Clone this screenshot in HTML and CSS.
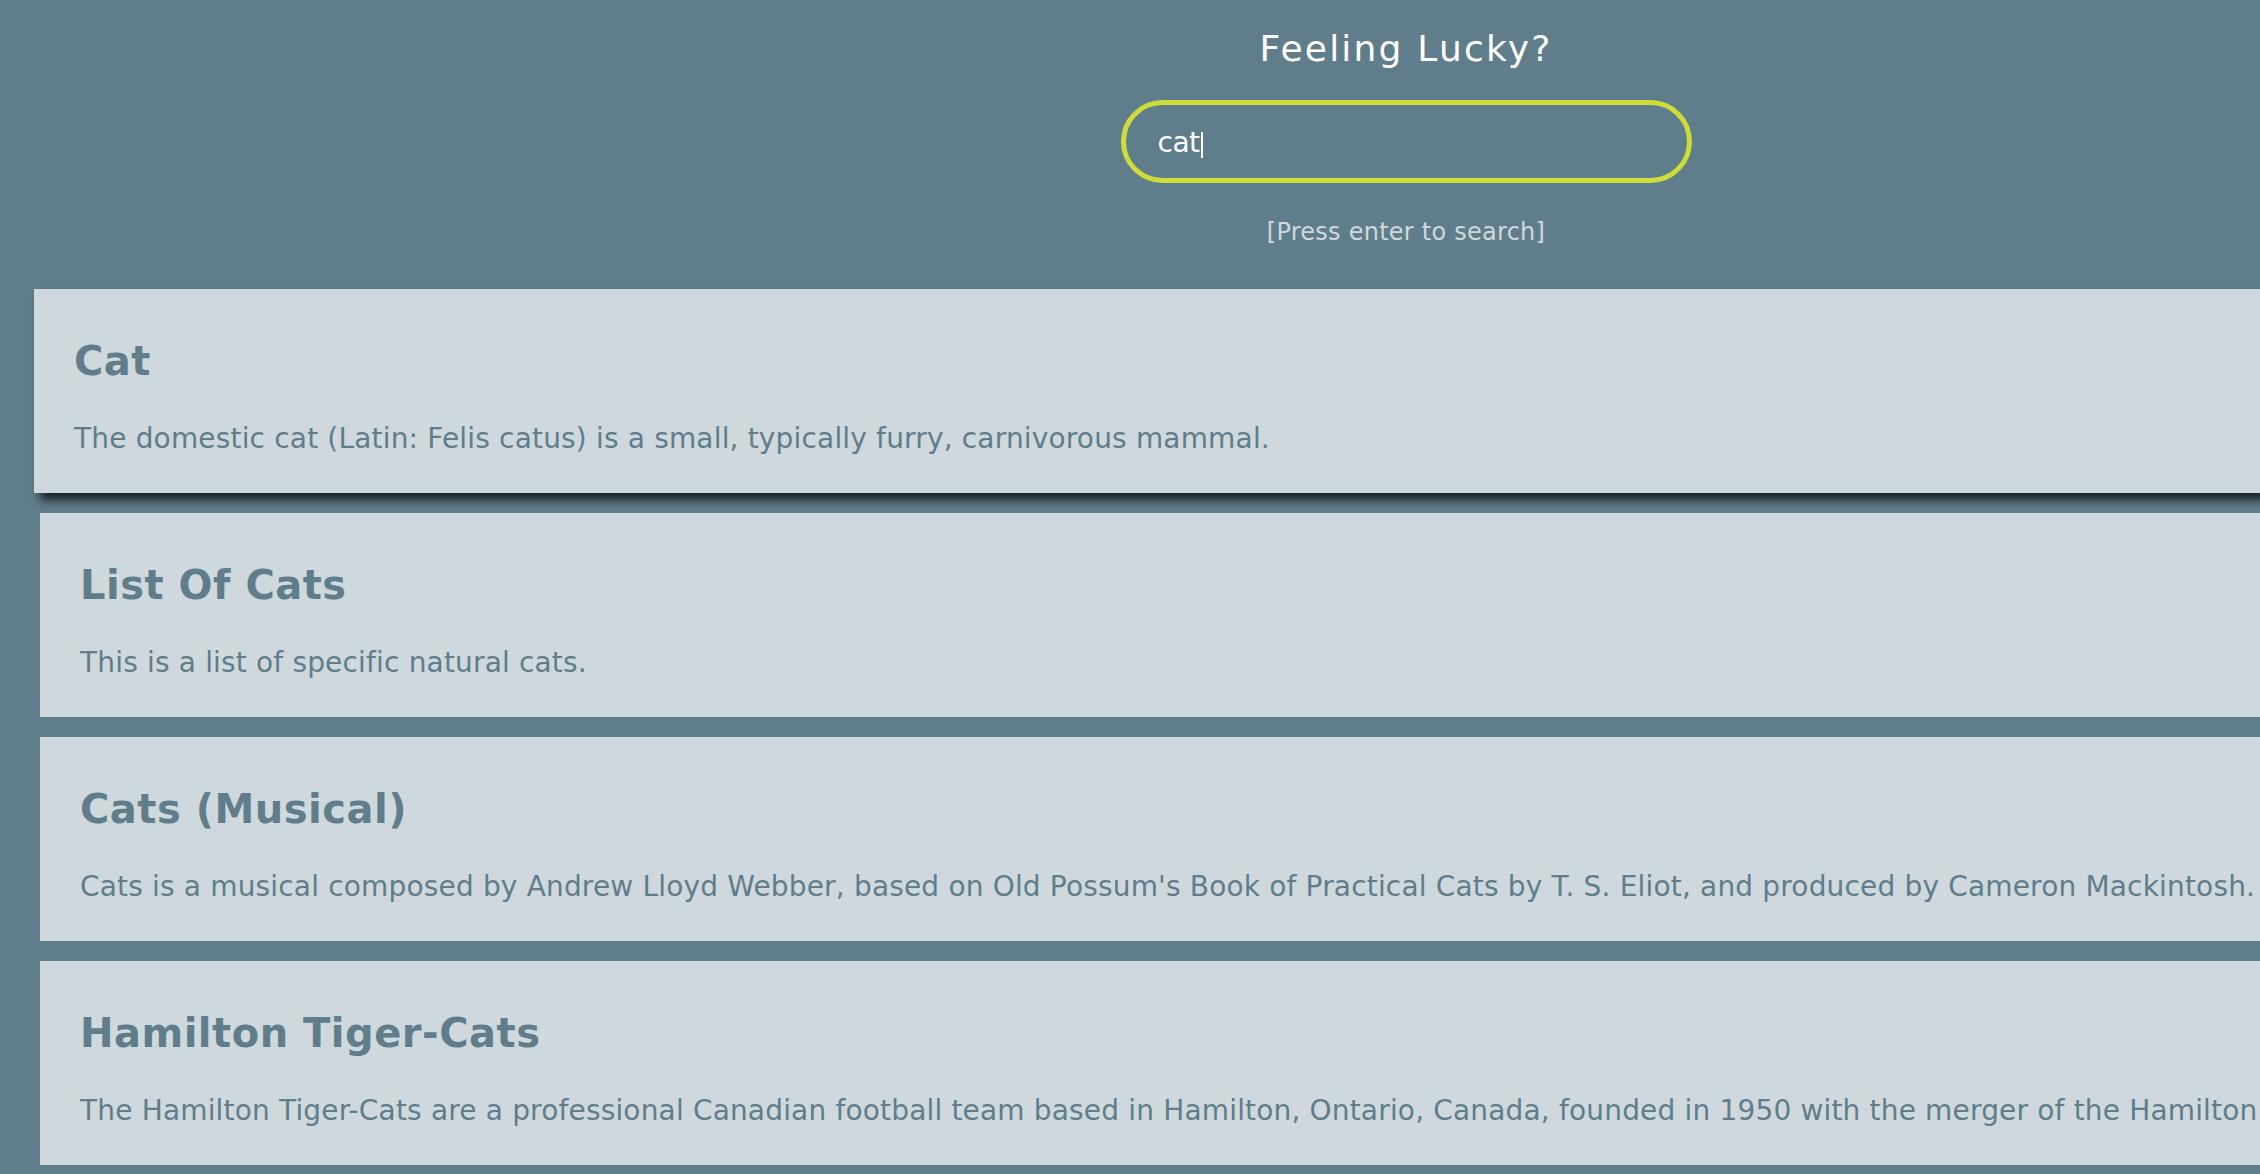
FILE: index.html
```html
<!DOCTYPE html>
<html lang="en">
<head>
<meta charset="utf-8">
<title>Feeling Lucky?</title>
<link rel="stylesheet" href="styles.css">
</head>
<body>
<div class="page">
  <header class="search">
    <h1 class="search-title">Feeling Lucky?</h1>
    <div class="search-box" role="textbox" aria-label="Search"><span class="search-value">cat</span><span class="search-caret"></span></div>
    <p class="search-hint">[Press enter to search]</p>
  </header>
  <main class="results">
    <article class="result result-active">
      <h2 class="result-title">Cat</h2>
      <p class="result-text">The domestic cat (Latin: Felis catus) is a small, typically furry, carnivorous mammal.</p>
    </article>
    <article class="result">
      <h2 class="result-title">List Of Cats</h2>
      <p class="result-text">This is a list of specific natural cats.</p>
    </article>
    <article class="result">
      <h2 class="result-title">Cats (Musical)</h2>
      <p class="result-text">Cats is a musical composed by Andrew Lloyd Webber, based on Old Possum's Book of Practical Cats by T. S. Eliot, and produced by Cameron Mackintosh.</p>
    </article>
    <article class="result">
      <h2 class="result-title">Hamilton Tiger-Cats</h2>
      <p class="result-text">The Hamilton Tiger-Cats are a professional Canadian football team based in Hamilton, Ontario, Canada, founded in 1950 with the merger of the Hamilton Tigers and the Hamilton Wildcats.</p>
    </article>
  </main>
</div>
</body>
</html>
```
FILE: styles.css
```css
html, body {
  margin: 0;
  padding: 0;
  background: #607d8b;
  overflow: hidden;
}
body {
  font-family: "DejaVu Sans", Verdana, sans-serif;
  color: #607d8b;
}
.page {
  width: 2812px;
  box-sizing: border-box;
  padding: 0 40px;
}
.search {
  display: flex;
  flex-direction: column;
  align-items: center;
  padding-top: 27px;
}
.search-title {
  margin: 0;
  font-size: 36px;
  line-height: 43px;
  font-weight: normal;
  color: #ffffff;
  letter-spacing: 2.2px;
}
.search-box {
  margin-top: 30px;
  width: 571px;
  height: 83px;
  box-sizing: border-box;
  border: 5px solid #cddc39;
  border-radius: 42px;
  padding: 3px 32px 0;
  display: flex;
  align-items: center;
  font-size: 28px;
  color: #ffffff;
}
.search-value {
  line-height: 34px;
  letter-spacing: -0.5px;
}
.search-caret {
  width: 2px;
  height: 26px;
  margin-left: 1px;
  margin-top: 4px;
  background: #ffffff;
}
.search-hint {
  margin: 35px 0 0;
  font-size: 24px;
  line-height: 29px;
  color: #cfd8dc;
  letter-spacing: 0.25px;
}
.results {
  display: flex;
  flex-direction: column;
  gap: 20px;
  margin-top: 42px;
}
.result {
  background: #cfd8dc;
  padding: 48px 40px 37px;
  height: 204px;
  box-sizing: border-box;
  white-space: nowrap;
}
.result-active {
  transform: translateX(-6px);
  box-shadow: 6px 7px 9px rgba(0, 0, 0, 0.75);
}
.result-title {
  margin: 0;
  font-size: 40px;
  line-height: 48px;
  font-weight: bold;
  letter-spacing: 0.5px;
}
.result-text {
  margin: 37px 0 0;
  font-size: 28px;
  line-height: 34px;
  letter-spacing: 0.17px;
}
```
